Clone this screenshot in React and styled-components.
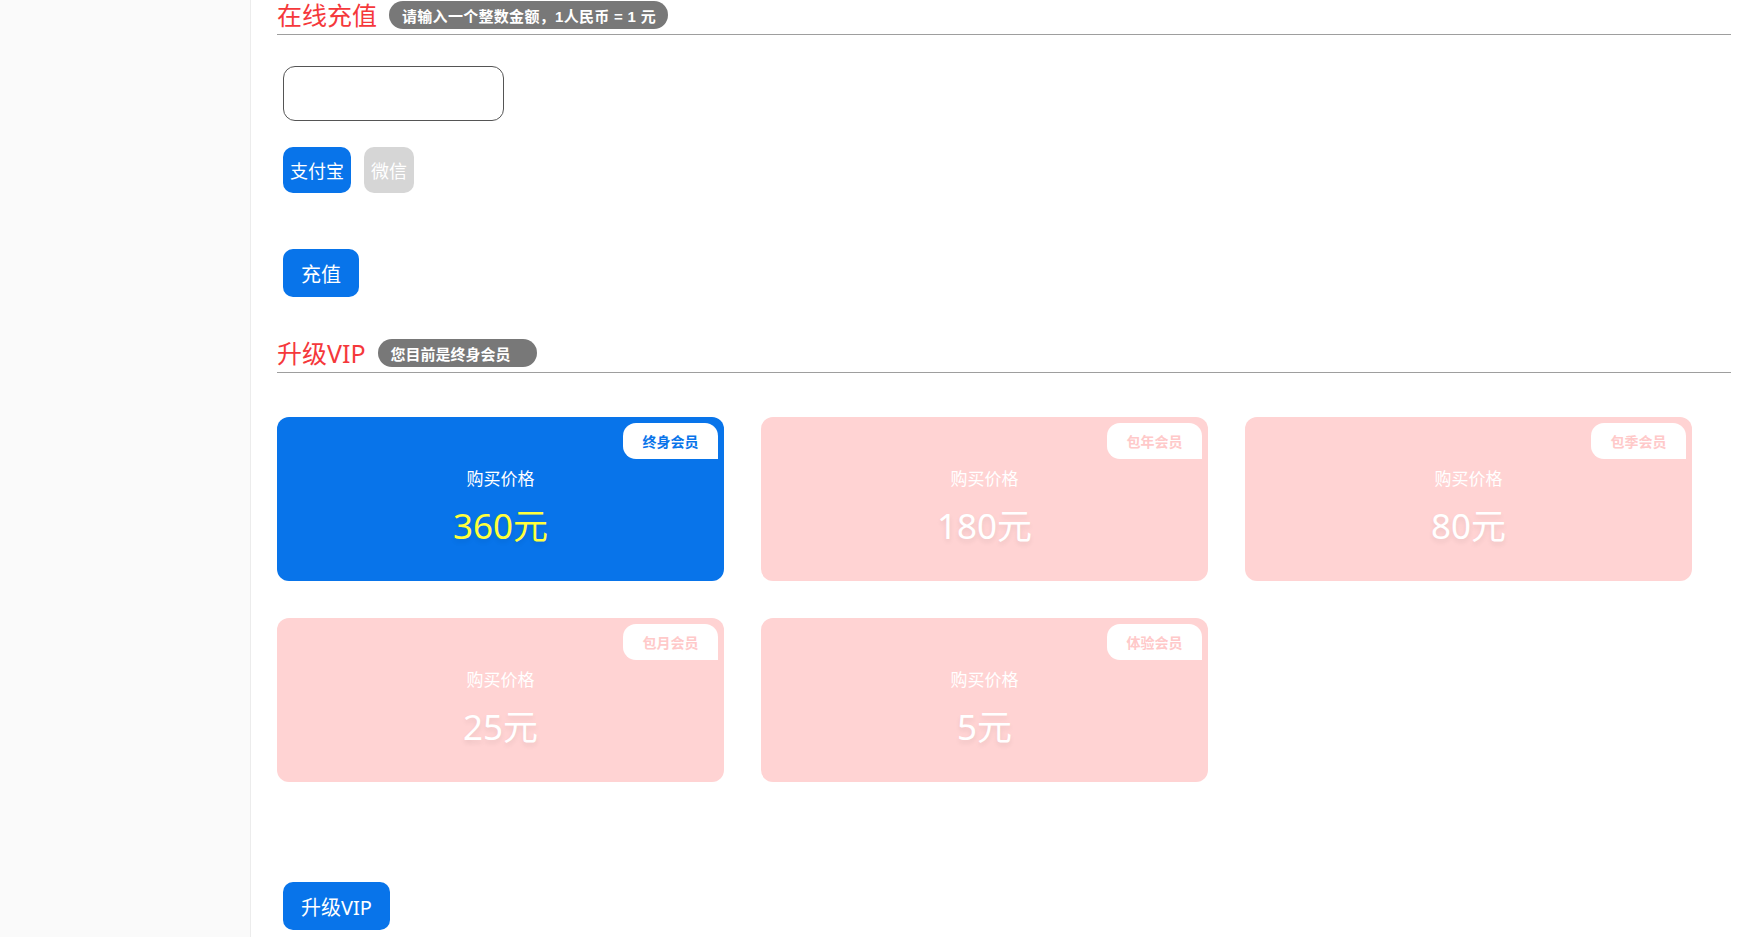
import React from "react";
import styled, { createGlobalStyle } from "styled-components";

const GlobalStyle = createGlobalStyle`
  html, body { margin: 0; padding: 0; background: #fff; }
  body { font-family: "Noto Sans", "Noto Sans CJK SC", sans-serif; }
  * { box-sizing: border-box; }
`;

const Page = styled.div`
  display: flex;
  min-height: 100vh;
  overflow: hidden;
`;

const Sidebar = styled.aside`
  width: 251px;
  flex: none;
  background: #fafafa;
  border-right: 1px solid #ececec;
`;

const Main = styled.main`
  flex: 1;
  padding: 0 25px 0 26px;
`;

const Section = styled.section`
  display: flex;
  flex-direction: column;
  margin-top: ${(p) => p.$top || 0}px;
`;

const Header = styled.div`
  display: flex;
  align-items: flex-start;
  gap: 12px;
  height: 35px;
  padding-top: 1px;
  border-bottom: 1px solid #9e9e9e;
`;

const Title = styled.h2`
  margin: 0;
  font-size: 25px;
  line-height: 28px;
  font-weight: 400;
  color: #f5383b;
  white-space: nowrap;
`;

const Badge = styled.span`
  height: 28px;
  display: inline-flex;
  align-items: center;
  padding: ${(p) => p.$pad || "0 12px 0 13px"};
  background: #787878;
  color: #fff;
  border-radius: 14px;
  font-family: "Liberation Sans", "Noto Sans CJK SC", sans-serif;
  font-size: 15px;
  font-weight: 700;
  letter-spacing: ${(p) => p.$spacing || 0}px;
  white-space: pre;
`;

const Body = styled.div`
  display: flex;
  flex-direction: column;
  align-items: flex-start;
  padding-left: 6px;
`;

const AmountInput = styled.input`
  margin-top: 31px;
  width: 221px;
  height: 55px;
  border: 1px solid #555;
  border-radius: 12px;
  outline: none;
  padding: 0 12px;
  font-size: 18px;
`;

const PayRow = styled.div`
  display: flex;
  gap: 13px;
  margin-top: 26px;
`;

const PayButton = styled.button`
  height: 46px;
  padding: 0 7px;
  border: none;
  border-radius: 10px;
  font-family: inherit;
  font-size: 18px;
  color: #fff;
  background: ${(p) => (p.$active ? "#0874ea" : "#d6d6d6")};
`;

const ActionButton = styled.button`
  margin-top: ${(p) => p.$top}px;
  height: 48px;
  padding: 0 18px;
  border: none;
  border-radius: 10px;
  font-family: inherit;
  font-size: 20px;
  color: #fff;
  background: #0874ea;
`;

const CardGrid = styled.div`
  display: grid;
  grid-template-columns: repeat(3, 447px);
  column-gap: 37px;
  row-gap: 37px;
  margin-top: 44px;
`;

const Card = styled.div`
  position: relative;
  height: 164px;
  border-radius: 12px;
  background: ${(p) => (p.$active ? "#0874ea" : "#ffd3d3")};
  display: flex;
  flex-direction: column;
  align-items: center;
  padding-top: 50px;
`;

const Tag = styled.span`
  position: absolute;
  top: 6px;
  right: 6px;
  width: 95px;
  height: 36px;
  background: #fff;
  border-radius: 13px 13px 0 13px;
  display: flex;
  align-items: center;
  justify-content: center;
  font-size: 14px;
  font-weight: 700;
  color: ${(p) => (p.$active ? "#0874ea" : "#ffc9c9")};
`;

const Label = styled.div`
  font-size: 17px;
  line-height: 24px;
  color: #fff;
`;

const Price = styled.div`
  margin-top: 13px;
  font-size: 35px;
  line-height: 44px;
  color: ${(p) => (p.$active ? "#ffff3c" : "#fff")};
  text-shadow: 0 3px 5px rgba(0, 0, 0, 0.08);
`;

const plans = [
  { tag: "终身会员", price: "360元", active: true },
  { tag: "包年会员", price: "180元" },
  { tag: "包季会员", price: "80元" },
  { tag: "包月会员", price: "25元" },
  { tag: "体验会员", price: "5元" },
];

export default function App() {
  return (
    <>
      <GlobalStyle />
      <Page>
        <Sidebar />
        <Main>
          <Section>
            <Header>
              <Title>在线充值</Title>
              <Badge $spacing={0.3}>请输入一个整数金额，1人民币 = 1 元</Badge>
            </Header>
            <Body>
              <AmountInput type="text" />
              <PayRow>
                <PayButton $active>支付宝</PayButton>
                <PayButton>微信</PayButton>
              </PayRow>
              <ActionButton $top={56}>充值</ActionButton>
            </Body>
          </Section>
          <Section $top={41}>
            <Header>
              <Title>升级VIP</Title>
              <Badge $pad="0 26px 0 13px">您目前是终身会员</Badge>
            </Header>
            <CardGrid>
              {plans.map((p) => (
                <Card key={p.tag} $active={p.active}>
                  <Tag $active={p.active}>{p.tag}</Tag>
                  <Label>购买价格</Label>
                  <Price $active={p.active}>{p.price}</Price>
                </Card>
              ))}
            </CardGrid>
            <Body>
              <ActionButton $top={100}>升级VIP</ActionButton>
            </Body>
          </Section>
        </Main>
      </Page>
    </>
  );
}
